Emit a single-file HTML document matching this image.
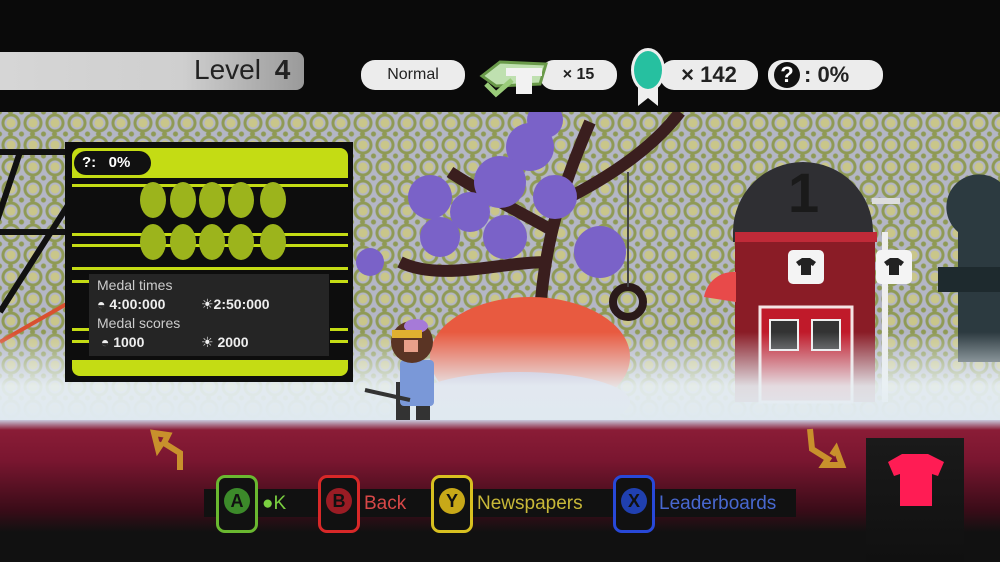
<!DOCTYPE html>
<html><head><meta charset="utf-8"><style>
*{margin:0;padding:0;box-sizing:border-box}
body{width:1000px;height:562px;overflow:hidden;background:#0a0a0a;position:relative;font-family:"Liberation Sans","DejaVu Sans",sans-serif}
.a{position:absolute}
.pill{position:absolute;background:#ececec;border-radius:14px;color:#222;font-weight:bold;display:flex;align-items:center;justify-content:center}
.wall{left:0;top:112px;width:1000px;height:310px;background-color:#b4b6c6;
background-image:radial-gradient(circle at 50% 50%,#c9c68a 0 4px,#b4b6c6 5px 6px,#8f9a55 7px 9px,transparent 10px),
radial-gradient(circle at 50% 50%,#8f9a55 0 2px,transparent 3px);
background-size:22px 22px,11px 22px;background-position:0 0,5px 11px}
.btn{position:absolute;top:475px;width:42px;height:58px;border:3px solid;border-radius:9px;background:#111}
.btn i{position:absolute;left:5px;top:10px;width:26px;height:26px;border-radius:50%;font-style:normal;font-weight:bold;font-size:18px;color:#111;display:flex;align-items:center;justify-content:center}
.bl{position:absolute;top:493px;font-size:19px}
</style></head><body>
<!-- top bar -->
<div class="a" style="left:0;top:52px;width:304px;height:38px;border-radius:0 8px 8px 0;background:repeating-linear-gradient(90deg,#d8d8d8 0 14px,#c4c4c4 14px 20px),#ccc;background:linear-gradient(90deg,#d6d6d6,#cfcfcf 60%,#9a9a9a)"></div>
<div class="a" style="left:194px;top:54px;font-size:28px;color:#222">Level <b style="margin-left:6px">4</b></div>
<div class="pill" style="left:361px;top:60px;width:104px;height:30px;font-weight:normal;font-size:16px">Normal</div>
<div class="pill" style="left:540px;top:60px;width:77px;height:30px;font-size:16px">× 15</div>
<svg class="a" style="left:476px;top:54px" width="76" height="44"><path d="M6 22 L24 8 L70 10 L64 30 L20 32 Z" fill="#bfe0b0" stroke="#6a9a4a" stroke-width="3"/><path d="M10 30 L20 40 L36 26" fill="none" stroke="#9acc7a" stroke-width="5"/><path d="M30 14 H66 V22 H56 V40 H40 V22 H30Z" fill="#f2f2f2"/></svg>
<div class="pill" style="left:660px;top:60px;width:98px;height:30px;font-size:22px">× 142</div>
<svg class="a" style="left:628px;top:46px" width="44" height="64"><path d="M10 30 V60 L20 52 L30 60 V30Z" fill="#eee"/><ellipse cx="20" cy="24" rx="17" ry="22" fill="#eee"/><ellipse cx="20" cy="24" rx="14" ry="19" fill="#26c0a0"/></svg>
<div class="pill" style="left:768px;top:60px;width:115px;height:30px;font-size:22px;justify-content:flex-start;padding-left:6px"><span style="background:#111;color:#fff;border-radius:50%;width:26px;height:26px;display:inline-flex;align-items:center;justify-content:center;margin-right:4px">?</span>: 0%</div>
<!-- scene -->
<div class="a wall"></div>
<svg class="a" style="left:0;top:112px" width="1000" height="310">
<path d="M0 40 H70 M0 120 H70 M20 40 L-10 130 M0 200 L70 90" stroke="#111" stroke-width="6" fill="none"/>
<path d="M0 230 L70 190" stroke="#d95030" stroke-width="4"/>
<path d="M540 200 C545 130 560 80 590 10 M560 90 C600 70 650 40 680 0 M555 120 C520 100 480 80 450 60 M548 150 C500 150 440 170 400 150" stroke="#3a1e1e" stroke-width="12" fill="none"/>
<g fill="#7a62c8"><circle cx="530" cy="35" r="24"/><circle cx="500" cy="70" r="26"/><circle cx="555" cy="85" r="22"/><circle cx="470" cy="100" r="20"/><circle cx="430" cy="85" r="22"/><circle cx="440" cy="125" r="20"/><circle cx="505" cy="125" r="22"/><circle cx="600" cy="140" r="26"/><circle cx="370" cy="150" r="14"/><circle cx="545" cy="8" r="18"/></g>
<circle cx="628" cy="190" r="15" fill="none" stroke="#2a1a1a" stroke-width="8"/>
<line x1="628" y1="60" x2="628" y2="175" stroke="#444" stroke-width="2"/>
<ellipse cx="530" cy="245" rx="100" ry="60" fill="#e85a40"/>
<ellipse cx="520" cy="290" rx="110" ry="30" fill="#b0a0c8"/>
<path d="M733 120 A70 70 0 0 1 873 120 V130 H733Z" fill="#2f2f33"/>
<text x="788" y="100" font-size="56" font-weight="bold" fill="#1a1a1a" font-family="Liberation Sans">1</text>
<rect x="735" y="120" width="140" height="170" fill="#8a1c26"/>
<rect x="735" y="120" width="142" height="10" fill="#c02a38"/>
<rect x="788" y="138" width="36" height="34" rx="5" fill="#f4f4f4"/><path d="M796 150 l6 -4 h8 l6 4 -3 4 -2 -1 v10 h-10 v-10 l-2 1z" fill="#222"/>
<rect x="760" y="195" width="92" height="95" fill="#c01a2a" stroke="#f4e4e4" stroke-width="3"/>
<rect x="770" y="208" width="28" height="30" fill="#333" stroke="#eee" stroke-width="2"/><rect x="812" y="208" width="28" height="30" fill="#333" stroke="#eee" stroke-width="2"/>
<path d="M704 185 A30 30 0 0 1 736 160 V190Z" fill="#e84a4a"/>
<rect x="882" y="120" width="6" height="170" fill="#eee"/><rect x="872" y="86" width="28" height="6" fill="#ddd"/>
<rect x="876" y="138" width="36" height="34" rx="5" fill="#f4f4f4"/><path d="M884 150 l6 -4 h8 l6 4 -3 4 -2 -1 v10 h-10 v-10 l-2 1z" fill="#222"/>
<path d="M958 120 A30 30 0 0 1 1000 70 V250 H958Z" fill="#2c3a40"/>
<rect x="938" y="155" width="62" height="25" fill="#1e2a2e"/>
<rect x="0" y="220" width="1000" height="90" fill="url(#fog)"/>
<defs><linearGradient id="fog" x1="0" y1="0" x2="0" y2="1"><stop offset="0" stop-color="#e6eef4" stop-opacity="0"/><stop offset=".6" stop-color="#e8f0f4" stop-opacity=".9"/><stop offset="1" stop-color="#dfe9f0"/></linearGradient></defs>
<!-- character -->
<rect x="396" y="270" width="14" height="50" fill="#333"/><rect x="416" y="270" width="14" height="50" fill="#333"/>
<rect x="400" y="248" width="34" height="46" rx="4" fill="#7a98d8"/>
<circle cx="412" cy="230" r="21" fill="#5a3424"/><ellipse cx="416" cy="214" rx="12" ry="7" fill="#a67ad8"/>
<rect x="392" y="218" width="30" height="8" fill="#e0b030"/><rect x="404" y="228" width="14" height="12" fill="#e8a08a"/>
<line x1="365" y1="278" x2="410" y2="288" stroke="#333" stroke-width="4"/>
</svg>
<!-- floor -->
<div class="a" style="left:0;top:420px;width:1000px;height:142px;background:linear-gradient(#c8c8dc 0,#8a1c36 10px,#7a1630 40px,#3a0c18 90px,#111 112px)"></div>
<div class="a" style="left:866px;top:438px;width:98px;height:124px;background:linear-gradient(#1a1a1a,#101010)"></div>
<svg class="a" style="left:884px;top:452px" width="64" height="56"><path d="M4 10 L18 2 H44 L60 10 L54 24 L48 22 V54 H16 V22 L10 24Z" fill="#ff1c54"/></svg>
<svg class="a" style="left:150px;top:425px" width="50" height="50"><path d="M30 45 L30 28 L14 18 L18 10 L4 8 L8 24 L12 18" fill="none" stroke="#c8902c" stroke-width="6"/></svg>
<svg class="a" style="left:800px;top:425px" width="50" height="56"><path d="M10 4 L12 24 L28 34 L24 40 L42 40 L36 24 L32 30" fill="none" stroke="#c8902c" stroke-width="6"/></svg>
<!-- panel -->
<div class="a" style="left:65px;top:142px;width:288px;height:240px;background:#0d0d0d"></div>
<div class="a" style="left:72px;top:148px;width:276px;height:30px;background:#c4dc14;border-radius:8px 8px 0 0"></div>
<div class="a" style="left:74px;top:151px;width:77px;height:24px;background:#111;border-radius:12px;color:#fff;font-weight:bold;font-size:15px;padding:3px 0 0 8px">?:&nbsp;&nbsp; 0%</div>
<div class="a" style="left:72px;top:184px;width:276px;height:3px;background:#c4dc14"></div>
<div class="a" style="left:72px;top:233px;width:276px;height:3px;background:#c4dc14"></div>
<div class="a" style="left:72px;top:244px;width:276px;height:3px;background:#c4dc14"></div>
<div class="a" style="left:72px;top:267px;width:276px;height:3px;background:#c4dc14"></div>
<div class="a" style="left:72px;top:280px;width:18px;height:3px;background:#c4dc14"></div><div class="a" style="left:330px;top:280px;width:18px;height:3px;background:#c4dc14"></div>
<div class="a" style="left:72px;top:328px;width:18px;height:3px;background:#c4dc14"></div><div class="a" style="left:330px;top:328px;width:18px;height:3px;background:#c4dc14"></div>
<div class="a" style="left:72px;top:340px;width:18px;height:3px;background:#c4dc14"></div><div class="a" style="left:330px;top:340px;width:18px;height:3px;background:#c4dc14"></div>
<svg class="a" style="left:135px;top:180px" width="160" height="82" fill="#9cb41c"><ellipse cx="18" cy="20" rx="13" ry="18"/><ellipse cx="48" cy="20" rx="13" ry="18"/><ellipse cx="77" cy="20" rx="13" ry="18"/><ellipse cx="106" cy="20" rx="13" ry="18"/><ellipse cx="138" cy="20" rx="13" ry="18"/><ellipse cx="18" cy="62" rx="13" ry="18"/><ellipse cx="48" cy="62" rx="13" ry="18"/><ellipse cx="77" cy="62" rx="13" ry="18"/><ellipse cx="106" cy="62" rx="13" ry="18"/><ellipse cx="138" cy="62" rx="13" ry="18"/></svg>
<div class="a" style="left:89px;top:274px;width:240px;height:82px;background:#252525;color:#ccc;font-size:14px;line-height:19px;padding:2px 8px">
Medal times<br><b style="color:#eee">◓ 4:00:000</b><b style="color:#eee;position:absolute;left:112px">☀2:50:000</b><br>Medal scores<br><b style="color:#eee">&nbsp;◓ 1000</b><b style="color:#eee;position:absolute;left:112px">☀ 2000</b></div>
<div class="a" style="left:72px;top:360px;width:276px;height:16px;background:#c4dc14;border-radius:0 0 8px 8px"></div>
<!-- buttons -->
<div class="a" style="left:204px;top:489px;width:592px;height:28px;background:#111"></div>
<div class="btn" style="left:216px;border-color:#6ab830"><i style="background:#3c8a2a">A</i></div>
<div class="bl" style="left:262px;color:#7ad040">●K</div>
<div class="btn" style="left:318px;border-color:#d82828"><i style="background:#9a1c24">B</i></div>
<div class="bl" style="left:364px;color:#d84848">Back</div>
<div class="btn" style="left:431px;border-color:#d8c020"><i style="background:#c8a818">Y</i></div>
<div class="bl" style="left:477px;color:#c8b838">Newspapers</div>
<div class="btn" style="left:613px;border-color:#2848d8"><i style="background:#2040b0">X</i></div>
<div class="bl" style="left:659px;color:#4868d0">Leaderboards</div>
</body></html>
